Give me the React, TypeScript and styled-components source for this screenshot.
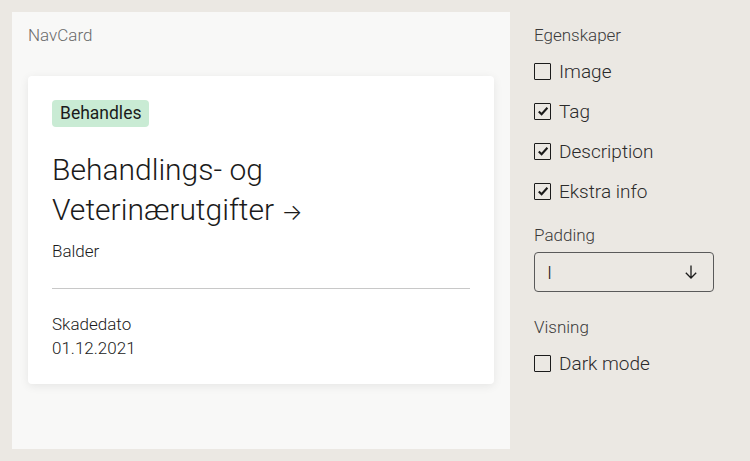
import { createGlobalStyle } from "styled-components";
import styled from "styled-components";

const GlobalStyle = createGlobalStyle`
  html, body {
    margin: 0;
    padding: 0;
    background: #ebe8e3;
    font-family: Roboto, "Noto Sans", sans-serif;
    color: #1b1b1b;
  }
`;

const Page = styled.div`
  display: flex;
  gap: 24px;
  padding: 12px;
  height: 461px;
  box-sizing: border-box;
`;

const Preview = styled.div`
  width: 498px;
  height: 437px;
  background: #f8f8f7;
  padding: 12px 16px;
  box-sizing: border-box;
`;

const PreviewLabel = styled.div`
  font-size: 17px;
  line-height: 22px;
  color: #6b6b6b;
  font-weight: 300;
`;

const Card = styled.div`
  margin-top: 30px;
  background: #fff;
  border-radius: 4px;
  box-shadow: 0 2px 10px rgba(0, 0, 0, 0.08);
  padding: 24px;
  height: 308px;
  box-sizing: border-box;
`;

const Tag = styled.span`
  display: inline-block;
  background: #c9ebd4;
  border-radius: 4px;
  padding: 0 8px;
  font-size: 17.5px;
  line-height: 27px;
  font-weight: 400;
`;

const Title = styled.h2`
  margin: 23px 0 0;
  font-size: 30px;
  line-height: 40px;
  font-weight: 300;
`;

const TitleArrow = styled.span`
  font-family: Inter, sans-serif;
  font-size: 22px;
  line-height: 1;
  font-weight: 300;
`;

const Description = styled.div`
  margin-top: 10px;
  font-size: 17px;
  line-height: 22px;
  font-weight: 300;
`;

const Divider = styled.hr`
  margin: 26px 0 0;
  border: none;
  border-top: 1px solid #c8c8c8;
`;

const Info = styled.div`
  margin-top: 23px;
  font-size: 17px;
  line-height: 24px;
  font-weight: 300;
`;

const Controls = styled.div`
  display: flex;
  flex-direction: column;
  padding-top: 12px;
  width: 180px;
`;

const GroupLabel = styled.div<{ $top?: number }>`
  font-size: 17px;
  line-height: 22px;
  color: #3b3b3b;
  font-weight: 300;
  margin-top: ${(p) => p.$top ?? 0}px;
  margin-bottom: 5px;
`;

const CheckRow = styled.label`
  display: flex;
  align-items: center;
  gap: 8px;
  height: 40px;
  font-size: 19px;
  font-weight: 300;
  color: #2b2b2b;
`;

const Box = styled.span`
  width: 15px;
  height: 15px;
  border: 1.5px solid #1b1b1b;
  border-radius: 1px;
  display: flex;
  align-items: center;
  justify-content: center;
`;

const Select = styled.div`
  margin-top: 1px;
  height: 40px;
  box-sizing: border-box;
  border: 1px solid #5a5a5a;
  border-radius: 4px;
  display: flex;
  align-items: center;
  justify-content: space-between;
  padding: 0 14px 0 12px;
  font-size: 19px;
  font-weight: 300;
`;

const Check = ({ label, checked }: { label: string; checked?: boolean }) => (
  <CheckRow>
    <Box>
      {checked && (
        <svg width="12" height="12" viewBox="0 0 12 12">
          <path d="M1.8 6.4 L4.6 9.2 L10.4 2.8" fill="none" stroke="#1b1b1b" strokeWidth="2.1" />
        </svg>
      )}
    </Box>
    {label}
  </CheckRow>
);

export default function App() {
  return (
    <>
      <GlobalStyle />
      <Page>
        <Preview>
          <PreviewLabel>NavCard</PreviewLabel>
          <Card>
            <Tag>Behandles</Tag>
            <Title>
              Behandlings- og
              <br />
              Veterinærutgifter <TitleArrow>→</TitleArrow>
            </Title>
            <Description>Balder</Description>
            <Divider />
            <Info>
              Skadedato
              <br />
              01.12.2021
            </Info>
          </Card>
        </Preview>
        <Controls>
          <GroupLabel>Egenskaper</GroupLabel>
          <Check label="Image" />
          <Check label="Tag" checked />
          <Check label="Description" checked />
          <Check label="Ekstra info" checked />
          <GroupLabel $top={13}>Padding</GroupLabel>
          <Select>
            <span>I</span>
            <svg width="16" height="16" viewBox="0 0 16 16">
              <path d="M8 1.5 V14 M2.8 8.8 L8 14 L13.2 8.8" fill="none" stroke="#1b1b1b" strokeWidth="1.3" />
            </svg>
          </Select>
          <GroupLabel $top={24}>Visning</GroupLabel>
          <Check label="Dark mode" />
        </Controls>
      </Page>
    </>
  );
}
